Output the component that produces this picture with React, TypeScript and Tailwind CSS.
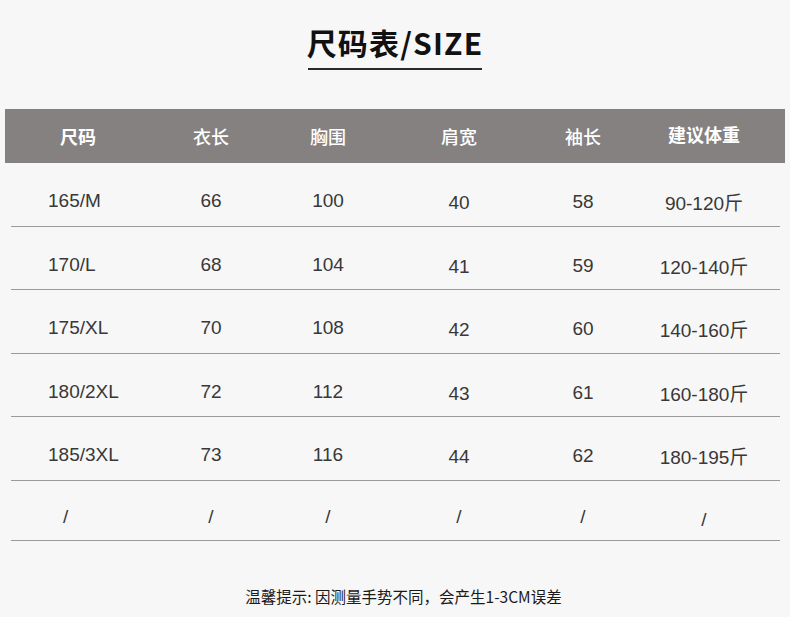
import React from 'react';

const COLS = 'grid grid-cols-[140px_120px_114px_148px_100px_142px]';

const HEADERS = ['尺码', '衣长', '胸围', '肩宽', '袖长', '建议体重'];

const ROWS = [
  { size: '165/M', len: '66', chest: '100', shoulder: '40', sleeve: '58', weight: '90-120斤', h: 'h-[64px]' },
  { size: '170/L', len: '68', chest: '104', shoulder: '41', sleeve: '59', weight: '120-140斤', h: 'h-[63px]' },
  { size: '175/XL', len: '70', chest: '108', shoulder: '42', sleeve: '60', weight: '140-160斤', h: 'h-[64px]' },
  { size: '180/2XL', len: '72', chest: '112', shoulder: '43', sleeve: '61', weight: '160-180斤', h: 'h-[63px]' },
  { size: '185/3XL', len: '73', chest: '116', shoulder: '44', sleeve: '62', weight: '180-195斤', h: 'h-[64px]' },
];

const App: React.FC = () => {
  return (
    <div className="w-[790px] h-[617px] overflow-hidden bg-[#f7f7f7] font-['Liberation_Sans','Noto_Sans_CJK_SC',sans-serif]">
      {/* title */}
      <div className="flex flex-col items-center pt-[22px]">
        <h1 className="font-['Noto_Sans_CJK_SC',sans-serif] text-[30px] leading-[40px] font-bold tracking-[1.2px] text-[#111]">
          尺码表/SIZE
        </h1>
        <div className="mt-[6px] h-[2px] w-[174px] bg-[#2a2a2a]" />
      </div>

      {/* header band */}
      <div className={`${COLS} mt-[39px] ml-[5px] w-[780px] h-[54px] pl-[6px] items-center bg-[#858181] text-white text-[18px] font-['Noto_Sans_CJK_SC',sans-serif]`}>
        {HEADERS.map((h, i) => (
          <div
            key={h}
            className={
              i === 0
                ? 'text-center pr-[6px] font-bold'
                : i === 5
                  ? 'text-center font-bold -mt-[4px]'
                  : 'text-center font-medium'
            }
          >
            {h}
          </div>
        ))}
      </div>

      {/* rows */}
      <div className="ml-[11px] w-[769px] text-[19px] leading-[22px] text-[#383838]">
        {ROWS.map((r) => (
          <div key={r.size} className={`${COLS} ${r.h} pt-[27px] border-b border-[#9b9b9b]`}>
            <div className="pl-[37px]">{r.size}</div>
            <div className="text-center">{r.len}</div>
            <div className="text-center">{r.chest}</div>
            <div className="text-center pt-[2px]">{r.shoulder}</div>
            <div className="text-center pt-[1px]">{r.sleeve}</div>
            <div className="text-center pt-[3px]">{r.weight}</div>
          </div>
        ))}
        <div className={`${COLS} h-[60px] pt-[25px] border-b border-[#9b9b9b]`}>
          <div className="pl-[52px]">/</div>
          <div className="text-center">/</div>
          <div className="text-center">/</div>
          <div className="text-center">/</div>
          <div className="text-center">/</div>
          <div className="text-center pt-[3px]">/</div>
        </div>
      </div>

      {/* note */}
      <p className="mt-[45px] pl-[17px] text-center text-[15.5px] leading-[20px] text-[#1a1a1a] font-['Noto_Sans_CJK_SC',sans-serif]">
        温馨提示: 因测量手势不同，会产生1-3CM误差
      </p>
    </div>
  );
};

export default App;
